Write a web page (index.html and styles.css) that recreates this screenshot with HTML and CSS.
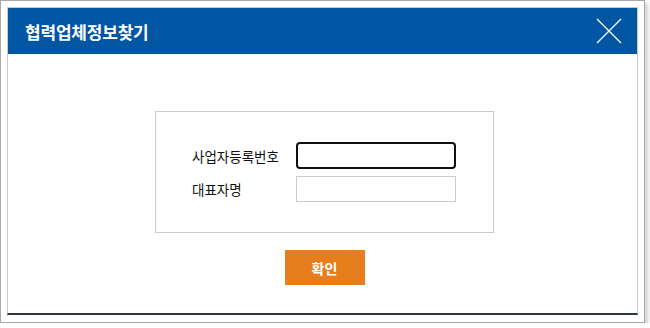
FILE: index.html
```html
<!DOCTYPE html>
<html lang="ko">
<head>
  <meta charset="UTF-8">
  <meta name="viewport" content="width=device-width, initial-scale=1.0">
  <title>협력업체정보찾기</title>
  <link rel="stylesheet" href="styles.css">
</head>
<body>

<div class="frame">
  <div class="popup">
    <div class="popup-head">
      <h1>협력업체정보찾기</h1>
      <button class="btn-close" title="닫기">
        <svg width="26" height="26" viewBox="0 0 26 26">
          <path d="M1 1 L25 25 M25 1 L1 25" stroke="#fff" stroke-width="1.3" fill="none"/>
        </svg>
      </button>
    </div>

    <div class="popup-body">
      <div class="search-box">
        <div class="row">
          <label for="bizno">사업자등록번호</label>
          <input type="text" id="bizno" class="focused">
        </div>
        <div class="row">
          <label for="ceo">대표자명</label>
          <input type="text" id="ceo">
        </div>
      </div>

      <button class="btn-ok">확인</button>
    </div>
  </div>
</div>

</body>
</html>
```

FILE: styles.css
```css
body {
  margin: 0;
  background-color: #fff;
  font-family: "Noto Sans CJK KR", "Noto Sans", sans-serif;
}
.frame {
  width: 645px;
  height: 323px;
  border: 1px solid #a8a8a8;
  background-color: #fff;
  box-shadow: 3px 3px 4px rgba(0, 0, 0, 0.18);
  padding: 6px;
  box-sizing: border-box;
}
.popup {
  height: 308px;
  border: 1px solid #c8c8c8;
  border-bottom: 2px solid #2e3644;
  box-sizing: border-box;
  display: flex;
  flex-direction: column;
}
.popup-head {
  height: 46px;
  background-color: #0056a2;
  display: flex;
  align-items: center;
  justify-content: space-between;
  padding: 0 15px 0 17px;
}
.popup-head h1 {
  margin: 0;
  color: #fff;
  font-size: 17px;
  font-weight: bold;
  letter-spacing: -0.2px;
}
.btn-close {
  background: none;
  border: 0;
  padding: 0;
  width: 26px;
  height: 26px;
  cursor: pointer;
}
.btn-close svg {
  display: block;
}
.popup-body {
  display: flex;
  flex-direction: column;
  align-items: center;
  padding-top: 57px;
  padding-left: 4px;
}
.search-box {
  width: 339px;
  height: 122px;
  border: 1px solid #ccc;
  box-sizing: border-box;
  padding: 30px 0 0 36px;
  display: flex;
  flex-direction: column;
  gap: 7px;
}
.row {
  display: flex;
  align-items: center;
}
.row label {
  width: 104px;
  font-size: 13.5px;
  color: #111;
}
.row input {
  width: 160px;
  height: 26px;
  border: 1px solid #ccc;
  box-sizing: border-box;
  margin: 0;
  padding: 0 5px;
}
.row input.focused {
  border: 2px solid #111;
  border-radius: 4px;
  height: 27px;
}
.btn-ok {
  margin-top: 17px;
  width: 80px;
  height: 35px;
  border: 0;
  background-color: #e67e1d;
  color: #fff;
  font-family: inherit;
  font-size: 14px;
  font-weight: bold;
  cursor: pointer;
}
```
